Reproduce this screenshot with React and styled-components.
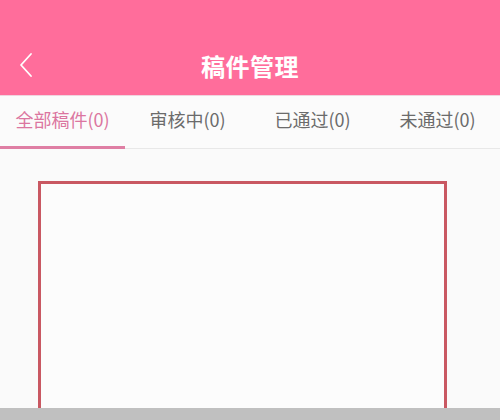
import React, { useState } from 'react'
import styled, { createGlobalStyle } from 'styled-components'

const GlobalStyle = createGlobalStyle`
  html, body {
    margin: 0;
    padding: 0;
    background: #fafafa;
  }
  body {
    font-family: "Noto Sans CJK SC", "Liberation Sans", sans-serif;
  }
`

const tabs = [
    { label: '全部稿件', count: 0 },
    { label: '审核中', count: 0 },
    { label: '已通过', count: 0 },
    { label: '未通过', count: 0 },
]

const App = () => {
    const [active, setActive] = useState(0)

    return (
        <Page>
            <GlobalStyle />
            <Header>
                <BackButton aria-label="返回">
                    <svg width="16" height="26" viewBox="0 0 16 26" fill="none">
                        <path d="M13 2 L3 13 L13 24" stroke="#ffffff" strokeWidth="1.8" strokeLinecap="round" strokeLinejoin="round" />
                    </svg>
                </BackButton>
                <Title>稿件管理</Title>
            </Header>
            <TabBar>
                {tabs.map((tab, i) => (
                    <Tab key={i} active={i === active} onClick={() => setActive(i)}>
                        {tab.label}({tab.count})
                    </Tab>
                ))}
            </TabBar>
            <Content>
                <Frame />
            </Content>
            <BottomBar />
        </Page>
    )
}

const Page = styled.div`
  width: 500px;
  height: 420px;
  display: flex;
  flex-direction: column;
  overflow: hidden;
  background: #fafafa;
`

const Header = styled.header`
  height: 95px;
  flex-shrink: 0;
  background: #ff6d9b;
  display: flex;
  align-items: flex-end;
  justify-content: center;
  padding-bottom: 12px;
  box-sizing: border-box;
  position: relative;
`

const BackButton = styled.button`
  position: absolute;
  left: 18px;
  bottom: 17px;
  border: none;
  background: none;
  padding: 0;
  display: flex;
`

const Title = styled.h1`
  margin: 0;
  color: #ffffff;
  font-size: 24px;
  font-weight: 700;
  line-height: 34px;
  letter-spacing: 0.5px;
`

const TabBar = styled.nav`
  height: 54px;
  flex-shrink: 0;
  display: grid;
  grid-template-columns: repeat(4, 1fr);
  background: #fbfbfb;
  border-top: 1px solid #f0d4de;
  border-bottom: 1px solid #e8e8e8;
  box-sizing: border-box;
`

const Tab = styled.div`
  display: flex;
  align-items: center;
  justify-content: center;
  padding-bottom: 5px;
  font-size: 18px;
  color: ${props => props.active ? '#db76a0' : '#6b6b6b'};
  border-bottom: 3px solid ${props => props.active ? '#df7fa4' : 'transparent'};
  margin-bottom: -1px;
`

const Content = styled.main`
  flex: 1;
  padding: 32px 53px 0 38px;
  display: flex;
  background: #fafafa;
`

const Frame = styled.div`
  flex: 1;
  border: 3px solid #c95862;
  border-bottom: none;
  background: #fcfcfc;
`

const BottomBar = styled.div`
  height: 12px;
  flex-shrink: 0;
  background: #c0c0c0;
`

export default App
